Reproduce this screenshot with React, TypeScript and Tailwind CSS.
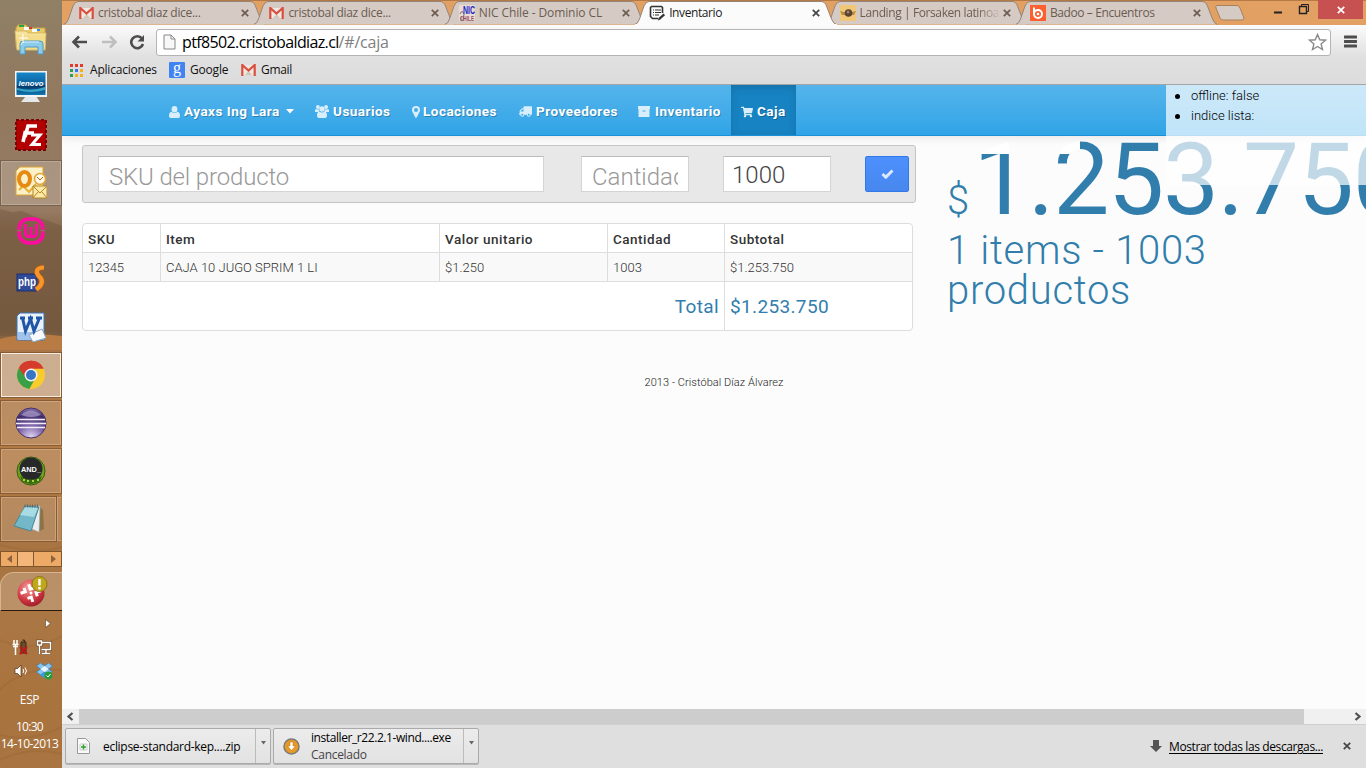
import type { ReactNode } from "react";
import { FaTruck, FaShoppingCart } from "react-icons/fa";

const ui = "font-['Open_Sans','Noto_Sans',sans-serif]";

/* ---------- Taskbar icons ---------- */

const Explorer = () => (
  <svg width="34" height="32" viewBox="0 0 34 32">
    <path d="M2 5l2-3h8l2 3h17v19H2z" fill="#e9c964" stroke="#c9a34a" />
    <path d="M5 2h5v2H5z" fill="#23a83b" /><path d="M13 4h5v2h-5z" fill="#d23c26" /><path d="M21 6h5v2h-5z" fill="#2f8fd8" />
    <path d="M10 4h5v3h-5zM18 6h5v3h-5z" fill="#fff" />
    <path d="M1 8h11l2 2h18l-1 17H3z" fill="#f7e49c" stroke="#d9b965" />
    <path d="M2 12h29l-1 14H4z" fill="#f3dd8b" />
    <path d="M6 31V21q0-3 3-3h17q3 0 3 3v10h-5v-7H11v7z" fill="#8ccbea" stroke="#4c9cc8" />
    <path d="M7 22q1-3 3-3h15" stroke="#d8f2fc" fill="none" />
    <path d="M9 11v9M5 15h9" stroke="#fff" />
  </svg>
);

const Lenovo = () => (
  <svg width="32" height="32" viewBox="0 0 32 32">
    <defs><linearGradient id="len" x2="0" y2="1"><stop stopColor="#1687c8" /><stop offset=".55" stopColor="#0b5e9c" /><stop offset=".6" stopColor="#063766" /><stop offset="1" stopColor="#1279b4" /></linearGradient></defs>
    <path d="M11 25h10l4 6H6z" fill="#e4e8ea" />
    <rect x="0" y="0" width="32" height="26" fill="#f2f4f5" />
    <rect x="1.5" y="1.5" width="29" height="22.500" fill="url(#len)" />
    <path d="M2 17q14 4 28-1v3q-14 4-28 0z" fill="#35a6c9" />
    <text x="16" y="15" textAnchor="middle" fontSize="7" fontStyle="italic" fontWeight="700" fill="#fff" fontFamily="Liberation Sans" textLength="25" lengthAdjust="spacingAndGlyphs">lenovo</text>
  </svg>
);

const FileZilla = () => (
  <svg width="32" height="32" viewBox="0 0 32 32">
    <rect x="1" y="1" width="30" height="30" fill="#b30000" stroke="#7c0303" strokeWidth="2" strokeDasharray="3 2" />
    <path d="M10 18L13 7h9M11 14h8" stroke="#fff" strokeWidth="3.600" fill="none" />
    <path d="M10.500 12L8 23" stroke="#fff" strokeWidth="3.600" />
    <path d="M16 16h9l-8 9.500h9" stroke="#fff" strokeWidth="3" fill="none" />
  </svg>
);

const Outlook = () => (
  <svg width="32" height="34" viewBox="0 0 32 34">
    <path d="M1 5l4-4h23v28H1z" fill="#fbf0c8" stroke="#dca52e" />
    <path d="M4 24l4-4 6 6 7-8" stroke="#e4b13a" fill="none" strokeWidth="2" />
    <ellipse cx="9.500" cy="13" rx="5.500" ry="7" fill="none" stroke="#e68a12" strokeWidth="4" />
    <circle cx="25" cy="13" r="5.500" fill="#fdf8e8" stroke="#e0a63a" strokeWidth="1.500" />
    <path d="M22 11l3 3 3-3" stroke="#a46a14" fill="none" />
    <path d="M18 20h14v12H18z" fill="#fbe9a5" stroke="#b58526" /><path d="M18 20l7 7 7-7M18 32l5-6M32 32l-5-6" fill="none" stroke="#b58526" />
  </svg>
);

const Wamp = () => (
  <svg width="28" height="28" viewBox="0 0 28 28">
    <rect x="2.200" y="2.200" width="23.600" height="23.600" rx="9" fill="none" stroke="#fb0d9d" strokeWidth="3.800" />
    <path d="M0 13.500h4.500M23.500 13.500h4.500" stroke="#8a7258" strokeWidth="1.500" />
    <path d="M8.500 7v9q0 3.500 3 3.500h5q3 0 3-3.500V7M14 10v9" fill="none" stroke="#fb0d9d" strokeWidth="3" />
  </svg>
);

const PhpStorm = () => (
  <svg width="30" height="28" viewBox="0 0 30 28">
    <rect x="1" y="9" width="20" height="17" fill="#2f4a99" stroke="#1f2f6d" />
    <path d="M28 2.500q-8 0-7 5.500 1 2.500 4 5.500 3 6-5 11" fill="none" stroke="#b75c10" strokeWidth="5.500" />
    <path d="M28 2.500q-8 0-7 5.500 1 2.500 4 5.500 3 6-5 11" fill="none" stroke="#f7942a" strokeWidth="4.200" />
    <text x="2" y="21" fontSize="13" fontWeight="700" fill="#fff" fontFamily="Liberation Sans" textLength="18" lengthAdjust="spacingAndGlyphs">php</text>
  </svg>
);

const Word = () => (
  <svg width="30" height="30" viewBox="0 0 30 30">
    <path d="M1 4l3-3h24v27H1z" fill="#e9f1fb" stroke="#3d74bb" />
    <path d="M2 20h26v8H2z" fill="#9fc3ea" /><path d="M13 23l13-6 4 9-13 4z" fill="#f7f9fc" stroke="#8aa6c8" />
    <path d="M4 6h5M12 6h5M20 6h6M6.500 6l3 13 5-12 3.500 12L23.500 6" fill="none" stroke="#1f56a8" strokeWidth="3" />
  </svg>
);

const Chrome = () => (
  <svg width="30" height="30" viewBox="0 0 30 30">
    <circle cx="15" cy="15" r="14" fill="#f8cb2f" />
    <path d="M15 15L2.800 8A14 14 0 0 1 27.500 8.500L15 8.500z" fill="#d63c2e" />
    <path d="M15 15L2.800 8a14 14 0 0 0 10.500 20.900l5-9z" fill="#39a046" />
    <path d="M15 8.500h12.500A14 14 0 0 0 2.800 8L9 17z" fill="#d63c2e" />
    <circle cx="15" cy="15" r="6.500" fill="#f3f3f3" /><circle cx="15" cy="15" r="5" fill="#3476c4" />
  </svg>
);

const Eclipse = () => (
  <svg width="32" height="32" viewBox="0 0 32 32">
    <defs><radialGradient id="ecl" cx=".5" cy="1" r="1"><stop stopColor="#e8ddf6" /><stop offset=".45" stopColor="#7b63a8" /><stop offset=".8" stopColor="#3d2b68" /><stop offset="1" stopColor="#8b7bae" /></radialGradient></defs>
    <circle cx="16" cy="16" r="15" fill="url(#ecl)" stroke="#43306d" />
    <path d="M6 8q10-9 20 0-10 4-20 0" fill="#b3a2d0" opacity=".7" />
    <path d="M2 12.500h28M1 16.500h30M2 20.500h28" stroke="#f1ecf8" strokeWidth="1.600" />
  </svg>
);

const AndroidSdk = () => (
  <svg width="30" height="30" viewBox="0 0 30 30">
    <circle cx="15" cy="15" r="14" fill="#6ca51b" /><circle cx="15" cy="15" r="14" fill="none" stroke="#3c5a12" />
    <circle cx="15" cy="13" r="11.500" fill="#26282a" />
    <path d="M4 20q11 7 22 0l-2 5q-9 6-18 0z" fill="#3b6a10" />
    <path d="M7 24h2m2 1h2m3 0h2m3-1h2" stroke="#a6d944" strokeWidth="2" />
    <text x="5" y="16" fontSize="8" fontWeight="700" fill="#fff" fontFamily="Liberation Sans" textLength="20" lengthAdjust="spacingAndGlyphs">AND_</text>
  </svg>
);

const Notepad = () => (
  <svg width="32" height="32" viewBox="0 0 32 32">
    <path d="M26 3l4 4 1 19-7 3z" fill="#8c7347" />
    <path d="M12 4l15-1-1 26-7-3z" fill="#e9eff0" stroke="#a4b3b6" strokeWidth=".6" />
    <path d="M12 3l14 1-8 24L1 23z" fill="#72b8c8" stroke="#4a8696" />
    <path d="M12 4l13 1-4 9L7 12z" fill="#a8dbe3" />
    <path d="M12 1.500v3m2.500-3v3m2.500-3v3m2.500-3v3m2.500-3v3m2.500-3v3" stroke="#5c6668" />
  </svg>
);

const Alert = () => (
  <svg width="32" height="34" viewBox="0 0 32 34">
    <defs><radialGradient id="alr" cx=".4" cy=".3" r=".8"><stop stopColor="#f79c9c" /><stop offset=".6" stopColor="#cf3640" /><stop offset="1" stopColor="#8d1620" /></radialGradient></defs>
    <circle cx="15" cy="18" r="13.500" fill="url(#alr)" />
    <path d="M5 15h5v-4M15.500 9v5h4M25 19h-5v4M14 27v-5h-4" stroke="#fff" strokeWidth="3" fill="none" transform="rotate(-18 15 18)" />
    <circle cx="15" cy="18" r="1.500" fill="#fff" />
    <circle cx="23.500" cy="9" r="7.500" fill="#c1a71c" stroke="#8a7712" />
    <path d="M23.500 4v6.500M23.500 12v2.500" stroke="#fff" strokeWidth="2.400" />
  </svg>
);

function Cell({ children, state = "idle" }: { children: ReactNode; state?: "idle" | "open" | "active" | "soft" }) {
  const box = {
    idle: "border-transparent",
    soft: "border-[#bfb2a2]/70 bg-white/20 outline outline-1 outline-[#5b4a38]/50",
    open: "border-[#d5ad84]/70 bg-white/15 outline outline-1 outline-[#6f4a28]/60",
    active: "border-[#f7ecdf] bg-white/40 outline outline-1 outline-[#6f4a28]/60",
  }[state];
  return (
    <div className="flex h-12 items-center px-px">
      <div className={`flex h-11 w-[60px] items-center justify-center border ${box}`}>{children}</div>
    </div>
  );
}

function Taskbar() {
  return (
    <aside className="relative flex h-[768px] w-[62px] shrink-0 flex-col overflow-hidden bg-[linear-gradient(#8f8066_0px,#92795e_100px,#967b62_210px,#88694d_230px,#795b40_330px,#a97748_352px,#b27a45_450px,#a77442_545px,#aa7643_620px,#a9733d_700px,#a97441_768px)]">
      <svg className="absolute left-0 top-0" width="62" height="768">
        <path d="M0 209l12 3 10-1 14 6 10 3 16 6v110H0z" fill="#6f573f" opacity=".45" />
        <path d="M0 339q25-7 62-3v14H0z" fill="#b87b43" />
        <path d="M0 640q30 14 62-4M0 690q20-22 62-20M0 735q30 8 62-8M0 760q30-14 62-6M0 545q40 10 62 2" stroke="#7d5128" strokeWidth="2" fill="none" opacity=".15" />
      </svg>
      <div className="relative flex flex-col pt-[15px]">
        <Cell><Explorer /></Cell>
        <Cell><Lenovo /></Cell>
        <Cell><FileZilla /></Cell>
        <Cell state="soft"><Outlook /></Cell>
        <Cell><Wamp /></Cell>
        <Cell><PhpStorm /></Cell>
        <Cell><Word /></Cell>
        <Cell state="active"><Chrome /></Cell>
        <Cell state="open"><Eclipse /></Cell>
        <Cell state="open"><AndroidSdk /></Cell>
        <div className="flex h-12 items-center px-px">
          <div className="flex h-11 w-[56px] items-center justify-center border border-[#d5ad84]/70 bg-white/15 outline outline-1 outline-[#6f4a28]/60"><Notepad /></div>
          <div className="ml-px h-11 w-1 border border-r-0 border-[#d5ad84]/70 bg-white/15" />
        </div>
        <div className="mt-2 flex h-4 border border-[#7f552c] bg-[#eda966]">
          <div className="flex w-4 items-center justify-center"><svg width="5" height="8"><path d="M5 0v8L0 4z" fill="#8c623a" /></svg></div>
          <div className="w-[17px] border-x border-[#7f552c] bg-[#f3b57a]" />
          <div className="flex flex-1 items-center justify-end pr-[5px]"><svg width="5" height="8"><path d="M0 0v8l5-4z" fill="#8c623a" /></svg></div>
        </div>
        <div className="mt-[5px] flex h-[39px] items-center justify-center rounded-tl-[14px] border-b border-l border-t border-b-[#2a1a0c] border-l-[#d8b48c] border-t-[#d8b48c] bg-white/20"><Alert /></div>
        <div className="flex h-6 items-center justify-end pr-[11px]"><svg width="6" height="9"><path d="M.5.5v8l5-4z" fill="#fff" stroke="#5b3a1c" strokeWidth=".6" /></svg></div>
        <div className="flex h-6 items-center gap-[7px] pl-3">
          <svg width="17" height="16" viewBox="0 0 17 16"><path d="M2 1v4M5 1v4M.5 5.500h6M3.500 5v5q0 1 0 6M1 7.500h5" stroke="#fff" strokeWidth="1.500" fill="none" /><path d="M9 3h5v11H9zM10.500 1h2v2" fill="#6f4a2a" stroke="#3d2a1a" /><path d="M8 8l7 7M15 8l-7 7" stroke="#c2161c" strokeWidth="2" /></svg>
          <svg width="16" height="16" viewBox="0 0 16 16"><path d="M6 3.500h8.500v7H5.500M10 11v3M6 14.500h8M1.500 2h4v4h-4zM3.500 6v9" stroke="#3d2a1a" strokeWidth="2.800" opacity=".5" fill="none" /><path d="M6 3.500h8.500v7H5.500M10 11v3M6 14.500h8M1.500 2h4v4h-4zM3.500 6v9" stroke="#fff" strokeWidth="1.400" fill="none" /></svg>
        </div>
        <div className="flex h-6 items-center gap-[8px] pl-[14px]">
          <svg width="14" height="14" viewBox="0 0 14 14"><path d="M1 4.500h2.500L7 1v12L3.500 9.500H1z" fill="#fff" stroke="#4a3018" strokeWidth=".7" /><path d="M9 5q1.500 2 0 4M11 3.500q3 3.500 0 7" stroke="#fff" fill="none" /></svg>
          <svg width="17" height="17" viewBox="0 0 17 17"><path d="M4.500 0L8.500 3l4-3 4 3-4 3 4 3-4 3-4-3-4 3-4-3 4-3-4-3z" fill="#86c5f0" stroke="#2a7fc0" strokeWidth=".7" /><path d="M4.500 6l4-3 4 3-4 3z" fill="#e9f5fd" /><path d="M4 12l4-3 4 3-4 3z" fill="#3d9ae0" /><circle cx="12.500" cy="12.500" r="4" fill="#2a9b3c" /><path d="M10.500 12.500l1.500 1.500 2.500-3" stroke="#fff" fill="none" /></svg>
        </div>
        <div className={`${ui} flex flex-col items-center pr-[3px] text-[12px] leading-4 text-white`}>
          <span className="mt-[9px] tracking-[-0.4px]">ESP</span>
          <span className="mt-[11px] tracking-[-0.7px]">10:30</span>
          <span className="mt-px whitespace-nowrap tracking-[-0.5px]">14-10-2013</span>
        </div>
      </div>
    </aside>
  );
}

/* ---------- Browser chrome ---------- */

const GmailIcon = () => (
  <svg width="15" height="12" viewBox="0 0 15 12"><path d="M1 1h13v10H1z" fill="#efe9df" /><path d="M4 11l3.500-4 3.500 4z" fill="#cfc8ba" /><path d="M1.300 12V1l6.200 5.500L13.700 1v11" fill="none" stroke="#d94f40" strokeWidth="2.200" /></svg>
);
const NicIcon = () => (
  <svg width="16" height="16" viewBox="0 0 16 16"><rect width="16" height="16" fill="#e7ddd3" /><path d="M1 9q2-5 4 0l-1 7M2 12v4" stroke="#76706c" fill="none" /><text x="4" y="9" fontSize="10" fontWeight="700" fill="#2420c8" fontFamily="Liberation Sans" textLength="12" lengthAdjust="spacingAndGlyphs">NIC</text><text x="1" y="15.500" fontSize="7" fontWeight="700" fill="#9a4c62" fontFamily="Liberation Sans" textLength="14" lengthAdjust="spacingAndGlyphs">CHILE</text></svg>
);
const InventoryIcon = () => (
  <svg width="16" height="16" viewBox="0 0 16 16"><path d="M9 13.500H3.500l-2-2v-9l1-1h10l1 1V8" fill="none" stroke="#333" strokeWidth="1.600" /><path d="M4 5h1m1 0h6M4 7.500h1m1 0h6M4 10h1m1 0h4" stroke="#333" strokeWidth="1.200" /><path d="M9 15.500l.5-2.500 5-4.500 1.500 1.700-5 4.500z" fill="#333" /></svg>
);
const LandingIcon = () => (
  <svg width="16" height="16" viewBox="0 0 16 16"><rect width="16" height="16" fill="#f0c878" /><path d="M0 6l4 1h8l4-1-2 4H2z" fill="#b98b45" /><circle cx="8.500" cy="8" r="3.800" fill="#5b4330" /><circle cx="8" cy="7" r="1.500" fill="#96846e" /></svg>
);
const BadooIcon = () => (
  <svg width="16" height="16" viewBox="0 0 16 16"><rect width="16" height="16" fill="#fb6130" /><path d="M4 2.500v7" stroke="#fff" strokeWidth="2" /><circle cx="8" cy="9" r="4" fill="none" stroke="#fff" strokeWidth="2" /><circle cx="8" cy="9" r="1.300" fill="#fff" /></svg>
);
const Cross = () => (
  <svg width="8" height="8" viewBox="0 0 8 8"><path d="M.8.800l6.400 6.400M7.200.800L.8 7.200" stroke="currentColor" strokeWidth="1.700" /></svg>
);

const tabs = [
  { icon: <GmailIcon />, title: "cristobal diaz dice...", track: "tracking-[-0.3px]" },
  { icon: <GmailIcon />, title: "cristobal diaz dice...", track: "tracking-[-0.3px]" },
  { icon: <NicIcon />, title: "NIC Chile - Dominio CL", track: "tracking-[-0.1px]" },
  { icon: <InventoryIcon />, title: "Inventario", track: "tracking-[-0.4px]", active: true },
  { icon: <LandingIcon />, title: "Landing | Forsaken latinoa", track: "tracking-[-0.4px]", fade: true },
  { icon: <BadooIcon />, title: "Badoo – Encuentros", track: "tracking-[-0.4px]" },
];

function TabStrip() {
  return (
    <div className="relative flex h-[25px] bg-[#e2a063] shadow-[inset_0_1px_0_#b57a45]">
      <div className="flex w-[1148px] pl-[2px]">
        {tabs.map((t, i) => (
          <div key={i} className={`relative flex w-[190.4px] shrink-0 items-center pb-px pl-[14px] pt-[2px] ${t.active ? "z-10" : ""}`}>
            <svg className="absolute left-0 top-0" width="202" height="26" viewBox="0 0 202 26">
              <path d="M-.5 24.500Q3 24 4.500 19L9 6q2-4.500 5-4.500h172q4 0 5.500 4.500l5 13q2 5 5 5.500" fill={t.active ? "#fbfbfb" : "#d6cbc4"} stroke="#958478" />
              {t.active && <path d="M0 24h202v2H0z" fill="#fbfbfb" />}
            </svg>
            <span className="relative flex w-4 justify-center">{t.icon}</span>
            <span className={`relative ml-1 w-[141px] whitespace-nowrap text-[12px] leading-5 ${t.track} ${t.active ? "text-[#1c1c1c]" : "text-[#6b5c52]"} ${t.fade ? "[mask-image:linear-gradient(90deg,#000_118px,transparent_141px)]" : ""}`}>{t.title}</span>
            <span className={`relative ml-[2px] ${t.active ? "text-[#444]" : "text-[#6b5c52]"}`}><Cross /></span>
          </div>
        ))}
      </div>
      <svg className="ml-[3px] mt-[4px]" width="34" height="18"><path d="M4 1.500h20q2 0 3 2.500l4 10q0 2-2 2H10q-2 0-3-2L3 4q-1-2.500 1-2.500z" fill="#d6cbc4" stroke="#a8805a" /></svg>
      <div className="ml-auto flex h-[19px] items-center">
        <svg width="52" height="19"><path d="M8 12.500h8" stroke="#222" strokeWidth="2" /><path d="M33.500 6.500h7v7h-7z" stroke="#222" strokeWidth="1.400" fill="none" /><path d="M35.500 6V4.500h7v7H41" stroke="#222" fill="none" /></svg>
        <div className="flex h-[19px] w-[45px] items-center justify-center bg-[#c75050] text-white"><Cross /></div>
        <div className="w-[3px]" />
      </div>
    </div>
  );
}

function Toolbar() {
  return (
    <div className="h-[60px] border-b border-[#a5a5a5] bg-[linear-gradient(#fbfbfb,#e0e0e0_32px,#dcdcdc)]">
      <div className="flex h-[33px] items-center pl-[9px]">
        <svg width="18" height="14" viewBox="0 0 18 14"><path d="M16 7H3M8 1.500L2.500 7 8 12.500" stroke="#4d4d4d" strokeWidth="2.600" fill="none" /></svg>
        <svg className="ml-3" width="18" height="14" viewBox="0 0 18 14"><path d="M1 7h13M9 1.500L14.500 7 9 12.500" stroke="#bfbfbf" strokeWidth="2.600" fill="none" /></svg>
        <svg className="ml-[9px]" width="18" height="16" viewBox="0 0 18 16"><path d="M14 4.500A6 6 0 1 0 15 10" stroke="#4d4d4d" strokeWidth="2.600" fill="none" /><path d="M16 1v6.500H9.500z" fill="#4d4d4d" /></svg>
        <div className="ml-[10px] mt-[1px] flex h-[27px] w-[1175px] items-center rounded-[3px] border border-[#b4b4b4] bg-white pl-[6px] pr-[3px] text-[16px]">
          <svg width="13" height="16" viewBox="0 0 13 16"><path d="M1 1h7l4 4v10H1zM8 1v4h4" fill="#f7f7f7" stroke="#878787" /></svg>
          <span className="ml-[6px] tracking-[-0.63px] text-black">ptf8502.cristobaldiaz.cl</span>
          <span className="tracking-[-0.2px] text-[#808080]">/#/caja</span>
          <svg className="ml-auto" width="19" height="18" viewBox="0 0 19 18"><path d="M9.500 1.500l2.300 5.300 5.700.4-4.400 3.700 1.400 5.600-5-3-5 3 1.400-5.600L1.500 7.200l5.700-.4z" fill="#fff" stroke="#8a8a8a" strokeWidth="1.400" /></svg>
        </div>
        <svg className="ml-[13px]" width="13" height="13"><path d="M1 2h11M1 6.500h11M1 11h11" stroke="#4d4d4d" strokeWidth="3" strokeLinecap="round" /></svg>
      </div>
      <div className="flex h-[24px] items-center pl-2 text-[12px] text-[#111]">
        <svg width="13" height="13"><path d="M0 0h3v3H0zM5 0h3v3H5zM10 0h3v3h-3z" fill="#e23b2e" /><path d="M0 5h3v3H0z" fill="#2f9e4f" /><path d="M5 5h3v3H5z" fill="#3b78e7" /><path d="M10 5h3v3h-3zM5 10h3v3H5zM10 10h3v3h-3z" fill="#f2b01e" /><path d="M0 10h3v3H0z" fill="#2f9e4f" /></svg>
        <span className="ml-[7px] w-[79px] whitespace-nowrap tracking-[-0.2px]">Aplicaciones</span>
        <span className="flex h-4 w-4 items-center justify-center rounded-[1px] bg-[#4283f3] pb-1 font-['Liberation_Serif',serif] text-[16px] leading-3 text-white">g</span>
        <span className="ml-[5px] w-[51px] tracking-[-0.2px]">Google</span>
        <GmailIcon />
        <span className="ml-[5px] tracking-[-0.3px]">Gmail</span>
      </div>
    </div>
  );
}

/* ---------- Page ---------- */

const UserGlyph = () => (
  <svg width="11" height="12" viewBox="0 0 11 12" fill="currentColor"><ellipse cx="5.500" cy="3.200" rx="2.900" ry="3.200" /><path d="M2.500 5.700Q0 6.200 0 10q0 2 1.600 2h7.800Q11 12 11 10q0-3.800-2.500-4.300Q5.500 8.300 2.500 5.700z" /></svg>
);
const UsersGlyph = () => (
  <svg width="14" height="13" viewBox="0 0 14 13" fill="currentColor"><circle cx="2.900" cy="2" r="1.900" /><circle cx="11.100" cy="2" r="1.900" /><circle cx="7" cy="4" r="2.700" /><path d="M0 7V5.500Q0 4 1 4q1.500.8 3 .2Q3.800 5.800 5 7zM14 7V5.500Q14 4 13 4q-1.500.8-3 .2.200 1.600-1 2.800zM4.200 6.500Q2 7 2 10.800 2 13 4 13h6q2 0 2-2.200 0-3.800-2.200-4.300Q7 8.500 4.200 6.500z" /></svg>
);
const PinGlyph = () => (
  <svg width="8" height="12" viewBox="0 0 8 12" fill="currentColor"><path fillRule="evenodd" d="M4 0a4 4 0 0 1 4 4Q8 5 7.500 6L4.700 11.600q-.7.8-1.400 0L.5 6Q0 5 0 4a4 4 0 0 1 4-4zm0 2a2 2 0 1 0 0 4 2 2 0 0 0 0-4z" /></svg>
);
const BoxGlyph = () => (
  <svg width="12" height="11" viewBox="0 0 12 11" fill="currentColor"><path fillRule="evenodd" d="M0 0h12v3H0zM.5 3h11v8H.5zM4.500 4.500v1h3v-1z" /></svg>
);
const CheckGlyph = () => (
  <svg width="13" height="10" viewBox="0 0 13 10"><path d="M1.500 5l3.300 3.200L11.500 1.500" stroke="#dbe8ff" strokeWidth="3" fill="none" /></svg>
);

function NavItem({ icon, label, cls, active }: { icon: ReactNode; label: ReactNode; cls: string; active?: boolean }) {
  return (
    <a className={`flex h-[50px] items-center whitespace-nowrap pl-[10px] pt-[3px] text-[13.5px] font-bold text-white [text-shadow:1px_1px_0_rgba(0,0,0,0.25)] ${cls} ${active ? "bg-[#1783c3] shadow-[inset_0_3px_8px_rgba(0,0,0,0.125)]" : ""}`}>
      <span className="text-[#d9eefb]">{icon}</span>
      {label}
    </a>
  );
}

function Nav() {
  return (
    <nav className="flex h-[51px] border-b border-[#1990d8] bg-gradient-to-b from-[#54b4eb] to-[#2fa4e7] pl-[97px] tracking-[0.48px] shadow-[0_1px_10px_rgba(0,0,0,0.1)]">
      <NavItem cls="w-[146px] gap-1" icon={<UserGlyph />} label={<>Ayaxs Ing Lara<svg className="ml-[2px]" width="8" height="5"><path d="M0 0h8L4 4.500z" fill="#fff" /></svg></>} />
      <NavItem cls="w-[97px] gap-1" icon={<UsersGlyph />} label="Usuarios" />
      <NavItem cls="w-[107px] gap-[3px]" icon={<PinGlyph />} label="Locaciones" />
      <NavItem cls="w-[119px] gap-1" icon={<FaTruck size={13} className="-scale-x-100" />} label="Proveedores" />
      <NavItem cls="w-[103px] gap-[5px]" icon={<BoxGlyph />} label="Inventario" />
      <NavItem cls="w-[65px] gap-[4px]" active icon={<FaShoppingCart size={12} />} label="Caja" />
    </nav>
  );
}

const cols = "grid grid-cols-[78px_279px_168px_117px_1fr]";
const cell = "border-r border-[#ddd] px-[5px] last:border-r-0";

function SaleForm() {
  const field = "h-9 border border-[#d4d4d4] border-t-[#bcbcbc] bg-white text-[24px] font-light outline-none placeholder:text-[#999]";
  return (
    <form className="flex h-[58px] w-[834px] items-center rounded-[3px] border border-[#c4c4c4] bg-[#e8e8e8] pl-[15px]">
      <input className={`${field} w-[446px] px-[10px] pt-[5px] tracking-[-0.15px]`} placeholder="SKU del producto" />
      <input className={`${field} ml-[37px] w-[108px] px-[10px] pt-[5px]`} placeholder="Cantidad" />
      <input className={`${field} ml-[34px] w-[108px] px-[8px] pt-[2px] text-[#444]`} defaultValue="1000" />
      <button type="button" className="ml-[34px] flex h-9 w-11 items-center justify-center rounded-[2px] border border-[#3079ed] bg-gradient-to-b from-[#4d90fe] to-[#4787ed]"><CheckGlyph /></button>
    </form>
  );
}

function SaleTable() {
  return (
    <div className="mt-5 w-[831px] overflow-hidden rounded-[4px] border border-[#ddd] bg-white text-[13px] leading-5 text-[#333]">
      <div className={`${cols} h-[28px] text-[13.5px] font-medium tracking-[0.5px] [&>div]:pt-[5px]`}>
        <div className={cell}>SKU</div><div className={cell}>Item</div><div className={cell}>Valor unitario</div><div className={cell}>Cantidad</div><div className={cell}>Subtotal</div>
      </div>
      <div className={`${cols} h-[29px] border-t border-[#ddd] bg-[#f9f9f9] font-light [&>div]:pt-[5px]`}>
        <div className={cell}>12345</div><div className={cell}>CAJA 10 JUGO SPRIM 1 LI</div><div className={cell}>$1.250</div><div className={cell}>1003</div><div className={cell}>$1.253.750</div>
      </div>
      <div className="grid h-[49px] grid-cols-[642px_1fr] border-t border-[#ddd] text-[19px] tracking-[0.35px] text-[#317eac] [&>div]:pt-[15px]">
        <div className={`${cell} text-right`}>Total</div><div className={cell}>$1.253.750</div>
      </div>
    </div>
  );
}

function Page() {
  return (
    <div className="relative h-[624px] overflow-hidden bg-[#fcfcfc] font-['Roboto',sans-serif]">
      <Nav />
      <div className="flex pl-5 pt-[9px]">
        <main className="w-[865px] shrink-0">
          <SaleForm />
          <SaleTable />
        </main>
        <section className="text-[40px] font-light leading-10 text-[#317eac]">
          <div className="-mt-[7px] flex h-[93px] items-baseline whitespace-nowrap">
            <span>$</span>
            <span className="-mt-[20px] ml-[4px] bg-[linear-gradient(#fff,#fff),linear-gradient(#317eac,#317eac),linear-gradient(#317eac,#317eac)] bg-[length:107px_36px,107px_200px,1000px_100%] bg-[position:0_0,0_36px,107px_0] bg-no-repeat bg-clip-text text-[100px] font-normal leading-[124px] tracking-[-1.3px] text-transparent">1.253.750</span>
          </div>
          <div className="w-[300px] tracking-[0.7px]">1 items - 1003 productos</div>
        </section>
      </div>
      <footer className="absolute left-0 top-[290px] w-[1304px] text-center text-[11px] font-light leading-4 tracking-[0.06px] text-[#222]">2013 - Cristóbal Díaz Álvarez</footer>
      <ul className="absolute right-0 top-0 h-[100px] w-[200px] bg-white/70 pl-[9px] pt-px text-[13px] font-light leading-5 text-black">
        <li className="flex items-center gap-[11px]"><i className="h-[5px] w-[5px] rounded-full bg-black" />offline: false</li>
        <li className="flex items-center gap-[11px]"><i className="h-[5px] w-[5px] rounded-full bg-black" />indice lista:</li>
      </ul>
    </div>
  );
}

function DownloadItem({ icon, children }: { icon: ReactNode; children: ReactNode }) {
  return (
    <div className="flex h-9 w-[206px] rounded-[2px] border border-[#aaa] bg-gradient-to-b from-[#ececec] to-[#e2e2e2] shadow-[0_1px_0_#b8b8b8]">
      <div className="flex w-[190px] items-center border-r border-[#bbb] pl-2">
        <span className="flex w-[18px] justify-center">{icon}</span>
        <div className="ml-[11px] whitespace-nowrap text-[12px] leading-[17px] text-black">{children}</div>
      </div>
      <div className="flex flex-1 justify-center pt-3"><svg width="5" height="4"><path d="M0 0h5L2.500 3.500z" fill="#666" /></svg></div>
    </div>
  );
}

export default function App() {
  return (
    <div className={`flex h-[768px] w-[1366px] overflow-hidden ${ui}`}>
      <Taskbar />
      <div className="flex w-[1304px] flex-col">
        <TabStrip />
        <Toolbar />
        <Page />
        <div className="flex h-[15px] items-center bg-[#f0f0f0]">
          <svg width="17" height="9"><path d="M10.500 1L6.500 4.500l4 3.500" stroke="#505050" strokeWidth="2.200" fill="none" /></svg>
          <div className="h-[15px] w-[1225px] bg-[#cdcdcd]" />
          <svg className="ml-auto" width="17" height="9"><path d="M6.500 1l4 3.500-4 3.500" stroke="#505050" strokeWidth="2.200" fill="none" /></svg>
        </div>
        <div className="flex h-[44px] items-start gap-[2px] border-t border-[#cfcfcf] bg-[#dfdfdf] pl-[3px] pt-[3px]">
          <DownloadItem icon={<svg width="13" height="16"><path d="M.5.5h8l4 4v11H.5z" fill="#fafafa" stroke="#999" /><path d="M3 6h7v6H3z" fill="none" stroke="#ccc" /><path d="M6.500 6.500v5M4 9h5" stroke="#2ba52b" strokeWidth="1.500" /></svg>}><span className="tracking-[-0.3px]">eclipse-standard-kep....zip</span></DownloadItem>
          <DownloadItem icon={<svg width="17" height="17"><circle cx="8.500" cy="8.500" r="7.500" fill="#e79a25" stroke="#7a7a7a" strokeWidth="1.500" /><path d="M7 4h3v4h2.500l-4 4.500-4-4.500H7z" fill="#fff" stroke="#b56f10" strokeWidth=".5" /></svg>}>
            <span className="tracking-[-0.42px]">installer_r22.2.1-wind....exe</span><br /><span className="tracking-[-0.3px] text-[#444]">Cancelado</span>
          </DownloadItem>
          <div className="ml-auto flex h-9 items-center pr-[15px]">
            <svg width="12" height="12"><path d="M3 0h6v6h3l-6 6-6-6h3z" fill="#555" /></svg>
            <span className="ml-[7px] mt-[2px] w-[155px] whitespace-nowrap text-[12px] tracking-[-0.4px] text-black underline underline-offset-2">Mostrar todas las descargas...</span>
            <span className="ml-[19px] text-[#444]"><Cross /></span>
          </div>
        </div>
      </div>
    </div>
  );
}
